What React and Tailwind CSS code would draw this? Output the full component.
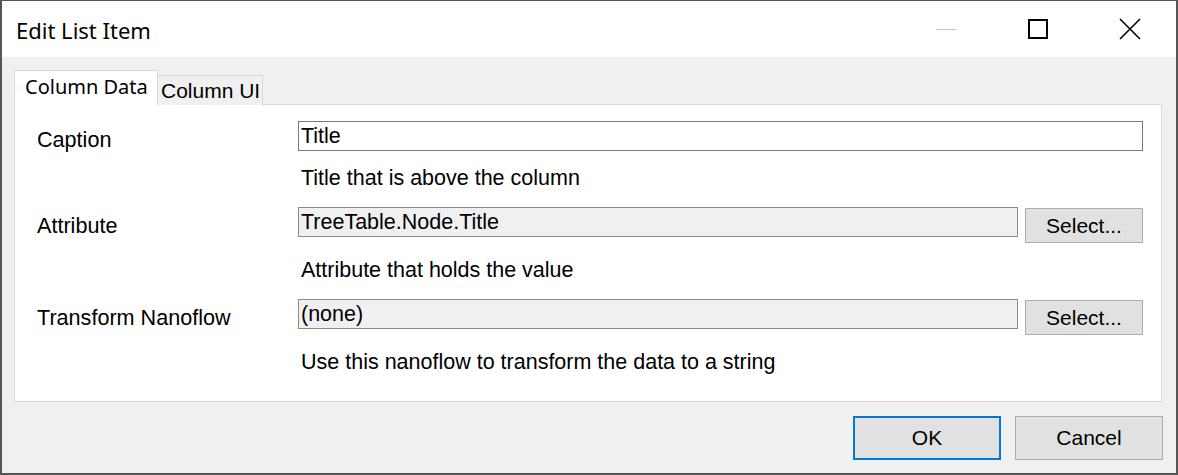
import React from "react";

const arial = { fontFamily: '"Liberation Sans", Arial, sans-serif' };
const segoe = { fontFamily: '"Noto Sans", "Open Sans", sans-serif' };

function Field({ label, value, disabled, withButton, helper, first }) {
  return (
    <div className={first ? "" : "mt-[17px]"}>
      <div className="flex items-start">
        <div className="w-[283px] shrink-0 pl-[22px] pt-[7px] text-[21.6px] leading-[24px] text-black" style={arial}>
          {label}
        </div>
        <div
          className={
            "flex-1 h-[30px] border flex items-center pl-[2px] text-[21.5px] text-black " +
            (disabled ? "bg-[#f0f0f0] border-[#8a8a8a]" : "bg-white border-[#7a7a7a]")
          }
          style={arial}
        >
          {value}
        </div>
        {withButton && (
          <button
            className="ml-[7px] mt-[1px] w-[118px] h-[35px] bg-[#e1e1e1] border border-[#adadad] text-[21px] text-black flex items-center justify-center"
            style={arial}
          >
            Select...
          </button>
        )}
      </div>
      <div
        className={"pl-[286px] text-[21.5px] leading-[24px] text-black " + (withButton ? "mt-[15px]" : "mt-[14px]")}
        style={arial}
      >
        {helper}
      </div>
    </div>
  );
}

export default function App() {
  return (
    <div className="w-[1178px] h-[475px] bg-[#555555] pt-[1px] px-[2px] pb-[2px]">
      <div className="h-full flex flex-col bg-[#f0f0f0]">
        {/* Title bar */}
        <div className="h-[56px] bg-white flex items-center shrink-0">
          <div className="pl-[14px] pt-[2px] text-[22px] text-black flex-1" style={segoe}>
            Edit List Item
          </div>
          <div className="flex items-center h-full">
            <div className="w-[92px] h-full flex items-center justify-center">
              <div className="w-[20px] h-[1px] bg-[#c4c4c4]" />
            </div>
            <div className="w-[92px] h-full flex items-center justify-center">
              <div className="w-[20px] h-[20px] border-2 border-black" />
            </div>
            <div className="w-[92px] h-full flex items-center justify-center">
              <svg width="22" height="22" viewBox="0 0 22 22">
                <path d="M1 1 L21 21 M21 1 L1 21" stroke="black" strokeWidth="1.6" fill="none" />
              </svg>
            </div>
          </div>
        </div>

        {/* Body */}
        <div className="flex-1 flex flex-col pl-[12px] pr-[14px] pt-[13px]">
          {/* Tabs */}
          <div className="flex items-end h-[35px] relative z-10">
            <div
              className="h-[35px] w-[144px] bg-white border border-[#d9d9d9] border-b-0 pl-[10px] pt-[3px] text-[20px] leading-[26px] text-black"
              style={segoe}
            >
              Column Data
            </div>
            <div
              className="h-[30px] w-[106px] -ml-[1px] bg-[#f0f0f0] border border-[#d9d9d9] border-b-0 pl-[3px] text-[21px] leading-[30px] text-black"
              style={arial}
            >
              Column UI
            </div>
          </div>
          {/* Panel */}
          <div className="-mt-[1px] h-[298px] bg-white border border-[#d9d9d9] pt-[16px] pr-[18px]">
            <Field first label="Caption" value="Title" helper="Title that is above the column" />
            <Field label="Attribute" value="TreeTable.Node.Title" disabled withButton helper="Attribute that holds the value" />
            <Field label="Transform Nanoflow" value="(none)" disabled withButton helper="Use this nanoflow to transform the data to a string" />
          </div>
          {/* Footer */}
          <div className="flex justify-end gap-[14px] mt-[14px] -mr-[1px]">
            <button
              className="w-[148px] h-[44px] bg-[#e1e1e1] border-2 border-[#0078d7] text-[21px] text-black flex items-center justify-center"
              style={arial}
            >
              OK
            </button>
            <button
              className="w-[148px] h-[44px] bg-[#e1e1e1] border border-[#adadad] text-[21px] text-black flex items-center justify-center"
              style={arial}
            >
              Cancel
            </button>
          </div>
        </div>
      </div>
    </div>
  );
}
